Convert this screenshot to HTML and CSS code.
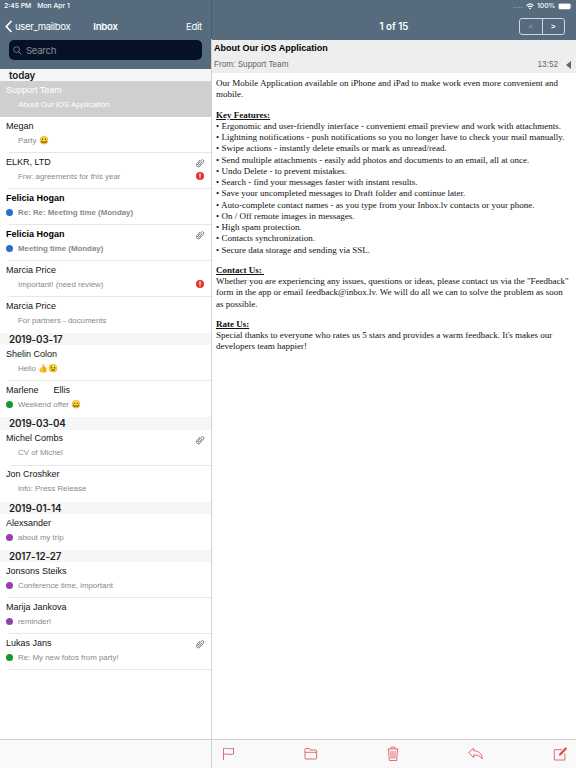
FILE: index.html
```html
<!DOCTYPE html>
<html lang="en">
<head>
    <meta charset="UTF-8">
    <title>Inbox</title>
    <link rel="stylesheet" href="styles.css">
</head>
<body>
    <!-- Shared icons -->
    <svg class="sprite">
        <symbol id="clip" viewBox="0 0 10 10">
            <g transform="rotate(40 5 5)" fill="none" stroke="#5c5c5c" stroke-width=".7" stroke-linecap="round">
                <path d="M3 3.2V7.4A2 2 0 0 0 7 7.4V2A1.4 1.4 0 0 0 4.2 2V7A.8 .8 0 0 0 5.8 7V3.2"/>
            </g>
        </symbol>
        <symbol id="alert" viewBox="0 0 8 8">
            <circle cx="4" cy="4" r="4" fill="#e2332b"/>
            <path d="M4 1.5V4.7M4 5.5V6.6" stroke="#fff" stroke-width="1.3"/>
        </symbol>
    </svg>

    <div class="app">
        <aside class="sidebar">
            <header class="side-header">
                <div class="status"><span>2:45 PM</span><span>Mon Apr 1</span></div>
                <nav class="side-nav">
                    <a class="back" href="#">
                        <svg width="8" height="13" viewBox="0 0 8 13"><path d="M6.5 1 L1.3 6.5 L6.5 12" fill="none" stroke="#fff" stroke-width="1.7"/></svg>
                        <span>user_mailbox</span>
                    </a>
                    <h1>Inbox</h1>
                    <a class="edit" href="#">Edit</a>
                </nav>
                <div class="search">
                    <svg width="9" height="9" viewBox="0 0 9 9"><circle cx="3.6" cy="3.6" r="2.9" fill="none" stroke="#8a8f9a" stroke-width=".8"/><path d="M5.7 5.7 L8.4 8.4" stroke="#8a8f9a" stroke-width=".9"/></svg>
                    <span>Search</span>
                </div>
            </header>

            <div class="mail-list">
                <h2>today</h2>
                <div class="mail selected">
                    <p class="sender">Support Team</p>
                    <p class="subject">About Our iOS Application</p>
                </div>
                <div class="mail">
                    <p class="sender">Megan</p>
                    <p class="subject">Party <span class="emoji">😀</span></p>
                </div>
                <div class="mail">
                    <p class="sender">ELKR, LTD <svg class="clip"><use href="#clip"/></svg></p>
                    <p class="subject">Frw: agreements for this year <svg class="alert"><use href="#alert"/></svg></p>
                </div>
                <div class="mail unread">
                    <p class="sender">Felicia Hogan</p>
                    <p class="subject"><i class="dot blue"></i>Re: Re: Meeting time (Monday)</p>
                </div>
                <div class="mail unread">
                    <p class="sender">Felicia Hogan <svg class="clip"><use href="#clip"/></svg></p>
                    <p class="subject"><i class="dot blue"></i>Meeting time (Monday)</p>
                </div>
                <div class="mail">
                    <p class="sender">Marcia Price</p>
                    <p class="subject">Important! (need review) <svg class="alert"><use href="#alert"/></svg></p>
                </div>
                <div class="mail">
                    <p class="sender">Marcia Price</p>
                    <p class="subject">For partners - documents</p>
                </div>

                <h2>2019-03-17</h2>
                <div class="mail">
                    <p class="sender">Shelin Colon</p>
                    <p class="subject">Hello <span class="emoji">👍😉</span></p>
                </div>
                <div class="mail">
                    <p class="sender">Marlene <span class="surname">Ellis</span></p>
                    <p class="subject"><i class="dot green"></i>Weekend offer <span class="emoji">😄</span></p>
                </div>

                <h2>2019-03-04</h2>
                <div class="mail">
                    <p class="sender">Michel Combs <svg class="clip"><use href="#clip"/></svg></p>
                    <p class="subject">CV of Michel</p>
                </div>
                <div class="mail">
                    <p class="sender">Jon Croshker</p>
                    <p class="subject">info: Press Release</p>
                </div>

                <h2>2019-01-14</h2>
                <div class="mail">
                    <p class="sender">Alexsander</p>
                    <p class="subject"><i class="dot purple"></i>about my trip</p>
                </div>

                <h2>2017-12-27</h2>
                <div class="mail">
                    <p class="sender">Jonsons Steiks</p>
                    <p class="subject"><i class="dot purple"></i>Conference time, important</p>
                </div>
                <div class="mail">
                    <p class="sender">Marija Jankova</p>
                    <p class="subject"><i class="dot purple"></i>reminder!</p>
                </div>
                <div class="mail">
                    <p class="sender">Lukas Jans <svg class="clip"><use href="#clip"/></svg></p>
                    <p class="subject"><i class="dot green"></i>Re: My new fotos from party!</p>
                </div>
            </div>
            <footer class="side-footer"></footer>
        </aside>

        <main class="reader">
            <header class="reader-header">
                <div class="status right">
                    <span class="signal">....</span>
                    <svg width="8" height="7" viewBox="0 0 8 7"><path d="M.5 2.6 Q4 -.7 7.5 2.6M1.8 4.1 Q4 2.1 6.2 4.1" fill="none" stroke="#fff" stroke-width="1.1"/><path d="M2.8 5.2 Q4 4.2 5.2 5.2 L4 6.5Z" fill="#fff"/></svg>
                    <span>100%</span>
                    <svg width="15" height="7" viewBox="0 0 15 7"><rect x=".3" y=".3" width="12.6" height="6.2" rx="1.7" fill="none" stroke="#a9b4be" stroke-width=".5"/><rect x=".8" y=".8" width="11.6" height="5.2" rx="1.2" fill="#fff"/><path d="M13.5 2.3 Q14.6 3.4 13.5 4.5Z" fill="#a9b4be"/></svg>
                </div>
                <div class="reader-nav">
                    <span class="counter">1 of 15</span>
                    <div class="pager"><button disabled>&lt;</button><button>&gt;</button></div>
                </div>
            </header>

            <section class="mail-head">
                <h3>About Our iOS Application</h3>
                <div class="from">
                    <span>From: Support Team</span>
                    <span class="time">13:52</span>
                    <svg width="5" height="8" viewBox="0 0 5 8"><path d="M5 0V8L0 4Z" fill="#666"/></svg>
                </div>
            </section>

            <article class="mail-body">
                <p>Our Mobile Application available on iPhone and iPad to make work even more convenient and<br>mobile.</p>
                <h4>Key Features:</h4>
                <p>
                    • Ergonomic and user-friendly interface - convenient email preview and work with attachments.<br>
                    • Lightning notifications - push notifications so you no longer have to check your mail manually.<br>
                    • Swipe actions - instantly delete emails or mark as unread/read.<br>
                    • Send multiple attachments - easily add photos and documents to an email, all at once.<br>
                    • Undo Delete - to prevent mistakes.<br>
                    • Search - find your messages faster with instant results.<br>
                    • Save your uncompleted messages to Draft folder and continue later.<br>
                    • Auto-complete contact names - as you type from your Inbox.lv contacts or your phone.<br>
                    • On / Off remote images in messages.<br>
                    • High spam protection.<br>
                    • Contacts synchronization.<br>
                    • Secure data storage and sending via SSL.
                </p>
                <h4>Contact Us:&nbsp;</h4>
                <p>Whether you are experiencing any issues, questions or ideas, please contact us via the "Feedback"<br>form in the app or email feedback@inbox.lv. We will do all we can to solve the problem as soon<br>as possible.</p>
                <h4>Rate Us:</h4>
                <p>Special thanks to everyone who rates us 5 stars and provides a warm feedback. It's makes our<br>developers team happier!</p>
            </article>

            <footer class="toolbar">
                <svg width="13" height="16" viewBox="0 0 13 16"><path d="M1.5 14V2.5 C4 1.8 6 3.4 11.5 2.3 V8 C6.5 9.2 4.5 7.4 1.5 8.2"/></svg>
                <svg width="14" height="16" viewBox="0 0 14 16"><path d="M1 3.2 Q1 2.5 1.7 2.5 H5 L6.2 4 H12 Q12.6 4 12.6 4.6 V12.3 Q12.6 13 12 13 H1.7 Q1 13 1 12.3Z M1 6.3H12.6"/></svg>
                <svg width="12" height="16" viewBox="0 0 12 16"><path d="M.7 3H11.3M4 2.8V1.2H8V2.8M1.5 3.2L2.3 14.5H9.7L10.5 3.2M3.8 5L4.2 12.7M6 5V12.7M8.2 5L7.8 12.7"/></svg>
                <svg width="16" height="16" viewBox="0 0 16 16"><path d="M.6 6.8 L5.7 2.1 V4.7 C10.9 4.8 13.9 8 14.3 13 C12 9.8 9.6 9 5.7 9 V11.5Z"/></svg>
                <svg width="15" height="16" viewBox="0 0 15 16"><path d="M9 3.7H1.3V14H11.9V7.3"/><path d="M5.8 10 L6.5 7.5 L12.6 1.3 L14.1 2.8 L8.2 9.1Z" class="pen"/></svg>
            </footer>
        </main>
    </div>
</body>
</html>
```

FILE: styles.css
```css
* {
    box-sizing: border-box;
}

body {
    margin: 0;
    font-family: "Liberation Sans", Arial, sans-serif;
    background-color: #fff;
}

h1, h2, h3, h4, p {
    margin: 0;
}

a {
    color: #fff;
    text-decoration: none;
}

.sprite {
    display: none;
}

.app {
    display: flex;
    width: 576px;
    height: 768px;
    overflow: hidden;
    white-space: nowrap;
}

/* Left column */
.sidebar {
    display: flex;
    flex-direction: column;
    width: 212px;
    border-right: 1px solid #d2d2d4;
    border-image: linear-gradient(#4a5d6e 40px, #d2d2d4 40px) 1;
}

.side-header {
    height: 69px;
    background-color: #566b7e;
    color: #fff;
    font-family: Inter, sans-serif;
}

.status {
    display: flex;
    align-items: center;
    gap: 6px;
    height: 12px;
    padding-left: 4px;
    font: 500 6.8px/12px Inter, sans-serif;
    color: #fff;
}

.side-nav {
    display: grid;
    grid-template-columns: 1fr auto 1fr;
    align-items: center;
    height: 28px;
    padding: 0 9px;
    font-size: 9.6px;
    letter-spacing: -0.25px;
}

.side-nav h1 {
    font-size: 9.6px;
    font-weight: 600;
}

.back {
    display: flex;
    align-items: center;
    gap: 2px;
    margin-left: -4px;
    letter-spacing: -0.37px;
}

.edit {
    text-align: right;
}

.search {
    display: flex;
    align-items: center;
    gap: 4px;
    height: 20px;
    margin: 0 9px;
    padding-left: 4px;
    border-radius: 5px;
    background-color: #061126;
    color: #8a8f9a;
    font-size: 9.6px;
    letter-spacing: -0.3px;
}

.mail-list {
    flex: 1;
}

.mail-list h2 {
    height: 12.2px;
    padding-left: 9px;
    background-color: #f6f6f6;
    color: #222;
    font: 600 9.8px/13px Inter, sans-serif;
    letter-spacing: -0.1px;
}

.mail {
    height: 36px;
    padding: 2px 7px 0 6px;
    background: linear-gradient(#e6e6e8, #e6e6e8) 9px 100% / 100% 1px no-repeat;
}

.mail.selected {
    background: #cfcfcf;
}

.mail:has(+ h2) {
    background: none;
}

.sender {
    display: flex;
    align-items: center;
    height: 13.5px;
    color: #111;
    font-size: 9px;
}

.subject {
    display: flex;
    align-items: center;
    height: 15.5px;
    padding-left: 12px;
    color: #8a8a8a;
    font-size: 7.88px;
    white-space: pre;
}

.selected p {
    color: #fff;
}

.unread p {
    font-weight: bold;
}

.unread .sender {
    color: #000;
}

.surname {
    margin-left: 15px;
}

.emoji {
    font-size: 8px;
}

.dot {
    width: 7px;
    height: 7px;
    margin: 0 5px 0 -12px;
    border-radius: 50%;
}

.blue {
    background-color: #266fd0;
}

.green {
    background-color: #109a2c;
}

.purple {
    background-color: #963fae;
}

.clip {
    width: 10px;
    height: 10px;
    margin: 0 -1px -3px auto;
}

.alert {
    width: 8px;
    height: 8px;
    margin-left: auto;
}

.side-footer {
    height: 29px;
    border-top: 1px solid #cfcfcf;
    background-color: #f9f9f9;
}

/* Right column */
.reader {
    display: flex;
    flex: 1;
    flex-direction: column;
}

.reader-header {
    height: 40px;
    background-color: #566b7e;
    color: #fff;
}

.status.right {
    justify-content: flex-end;
    gap: 2.7px;
    padding: 0 3px 0 0;
}

.signal {
    color: #a9b4be;
    letter-spacing: 0.6px;
}

.reader-nav {
    display: grid;
    grid-template-columns: 1fr auto 1fr;
    align-items: center;
    height: 28px;
    padding: 0 11px;
}

.counter {
    grid-column: 2;
    font: 600 9.7px Inter, sans-serif;
}

.pager {
    display: flex;
    justify-self: end;
    width: 46px;
    height: 17px;
    border: 1px solid #d0d7dd;
    border-radius: 3px;
}

.pager button {
    flex: 1;
    padding: 0;
    border: none;
    background: none;
    color: #fff;
    font: bold 7.5px "Liberation Sans", sans-serif;
}

.pager button:disabled {
    border-right: 1px solid #d0d7dd;
    color: #8b9aa8;
}

.mail-head {
    height: 33px;
    padding: 0 5px 0 2px;
    background-color: #eee;
}

.mail-head h3 {
    height: 16px;
    font-size: 9px;
    line-height: 17px;
}

.from {
    display: flex;
    align-items: center;
    height: 17px;
    color: #666;
    font-size: 8.2px;
}

.time {
    margin-left: auto;
    margin-right: 8px;
}

.mail-body {
    flex: 1;
    padding: 5px 0 0 4px;
    color: #111;
    font: 9px/11.25px "Liberation Serif", "Times New Roman", serif;
}

.mail-body h4 {
    margin-top: 9px;
    font-size: inherit;
    text-decoration: underline;
}

.toolbar {
    display: flex;
    align-items: center;
    justify-content: space-between;
    height: 29px;
    padding: 0 8px 0 10px;
    border-top: 1px solid #cfcfcf;
    background-color: #f9f9f9;
}

.toolbar path {
    fill: none;
    stroke: #d94a50;
    stroke-width: .8;
}

.toolbar .pen {
    fill: #d94a50;
    stroke: none;
}
```
